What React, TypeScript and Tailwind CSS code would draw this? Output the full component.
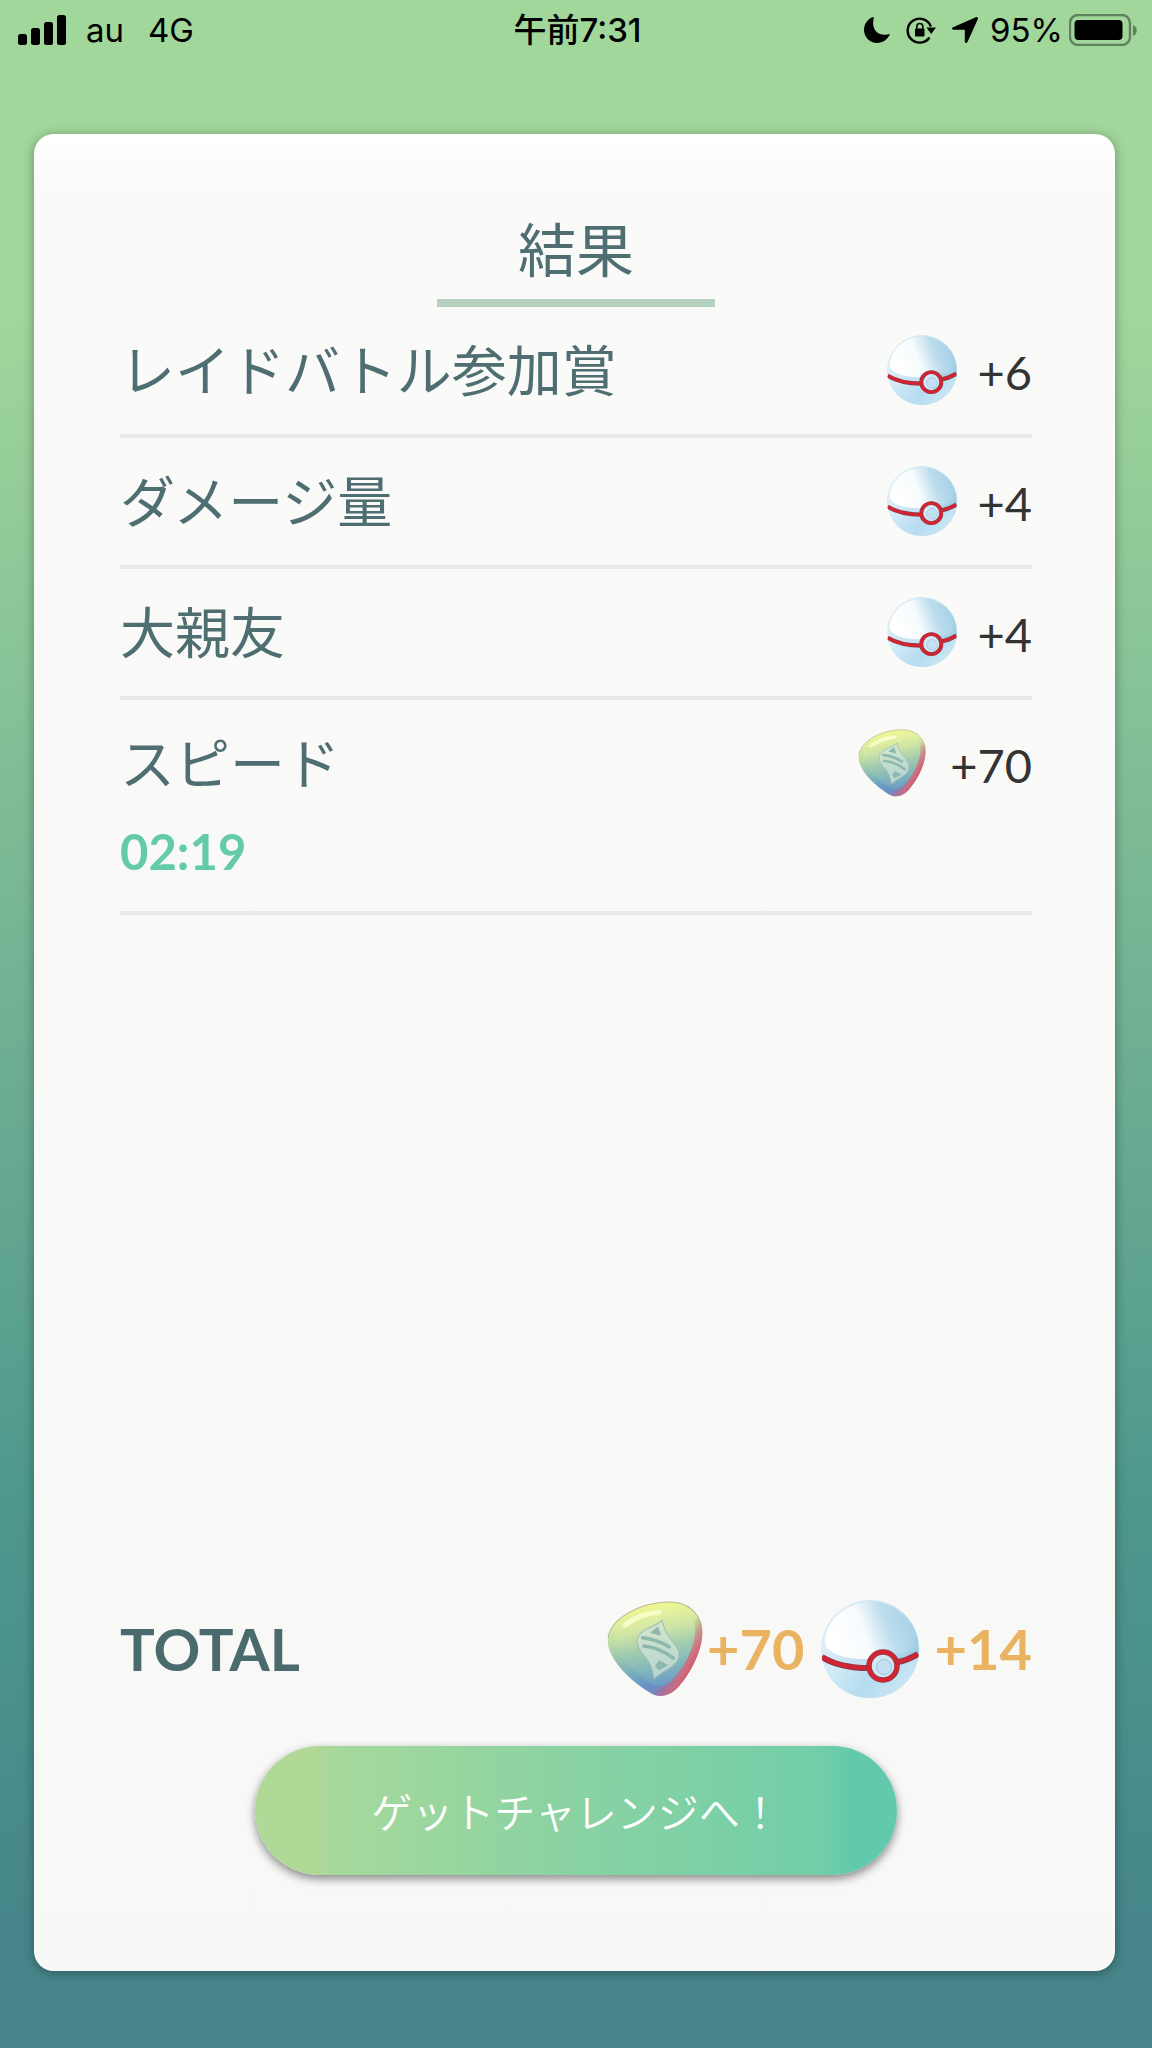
import { useId } from "react";

interface IconProps {
  className?: string;
}

interface Reward {
  label: string;
  amount: string;
  kind: "ball" | "candy";
  time?: string;
}

const rewards: Reward[] = [
  { label: "レイドバトル参加賞", amount: "+6", kind: "ball" },
  { label: "ダメージ量", amount: "+4", kind: "ball" },
  { label: "大親友", amount: "+4", kind: "ball" },
  { label: "スピード", amount: "+70", kind: "candy", time: "02:19" },
];

function PremierBall({ className }: IconProps) {
  const id = useId();

  return (
    <svg viewBox="0 0 98 98" className={className} aria-hidden="true">
      <defs>
        <linearGradient id={`${id}-top`} x1="0.15" y1="0.2" x2="0.95" y2="0.6">
          <stop offset="0" stopColor="#dceef6" />
          <stop offset="0.5" stopColor="#c3e1f0" />
          <stop offset="1" stopColor="#9fcde4" />
        </linearGradient>
        <linearGradient id={`${id}-shine`} x1="0.1" y1="0.6" x2="0.95" y2="0.4">
          <stop offset="0" stopColor="#ffffff" />
          <stop offset="0.4" stopColor="#f6fbfd" />
          <stop offset="0.72" stopColor="#bddded" />
          <stop offset="1" stopColor="#a9d2e8" />
        </linearGradient>
        <linearGradient id={`${id}-base`} x1="0" y1="0.4" x2="1" y2="0.8">
          <stop offset="0" stopColor="#d6edf8" />
          <stop offset="0.5" stopColor="#b5dcf0" />
          <stop offset="1" stopColor="#d3eaf5" />
        </linearGradient>
        <clipPath id={`${id}-clip`}>
          <circle cx="49" cy="49" r="49" />
        </clipPath>
      </defs>
      <g clipPath={`url(#${id}-clip)`}>
        <rect width="98" height="98" fill={`url(#${id}-top)`} />
        <path d="M4 43C4 22 24 2 50 2c24 0 41 19 43 36 0 11-8 16-20 16-6-5-19-4-24 5C28 60 5 54 4 43Z" fill={`url(#${id}-shine)`} />
        <path d="M0 56c14 8 30 11 48 12l14 8 17-12c8-1 13-4 19-8v42H0Z" fill={`url(#${id}-base)`} />
        <path d="M1 57c13 8 29 11 47 11M76 62c8-1 14-4 21-8" fill="none" stroke="#8c3a4c" strokeWidth="6" />
        <path d="M1 57c13 8 29 11 47 11M76 62c8-1 14-4 21-8" fill="none" stroke="#d4242f" strokeWidth="4" />
      </g>
      <circle cx="62" cy="66" r="14" fill="#d2e9f5" stroke="#8c3a4c" strokeWidth="5.5" />
      <circle cx="62" cy="66" r="14" fill="none" stroke="#d4242f" strokeWidth="4" />
      <circle cx="63" cy="67" r="7.500" fill="#c3e1f3" stroke="#9fc4da" strokeWidth="1" />
    </svg>
  );
}

function RareCandy({ className }: IconProps) {
  const id = useId();

  return (
    <svg viewBox="0 0 94 94" className={className} aria-hidden="true">
      <defs>
        <linearGradient id={`${id}-body`} x1="0.4" y1="0" x2="0.6" y2="1">
          <stop offset="0" stopColor="#f3f98e" />
          <stop offset="0.2" stopColor="#dcee9e" />
          <stop offset="0.45" stopColor="#a9d0ab" />
          <stop offset="0.7" stopColor="#77aebb" />
          <stop offset="0.88" stopColor="#6690c6" />
          <stop offset="1" stopColor="#8a7cb8" />
        </linearGradient>
        <linearGradient id={`${id}-edge`} x1="0.45" y1="0.45" x2="0.9" y2="0.7">
          <stop offset="0.55" stopColor="#e0525f" stopOpacity="0" />
          <stop offset="0.85" stopColor="#dd6577" stopOpacity="0.8" />
          <stop offset="1" stopColor="#e0525f" />
        </linearGradient>
        <linearGradient id={`${id}-face`} x1="0.4" y1="0" x2="0.6" y2="1">
          <stop offset="0" stopColor="#f0f79a" />
          <stop offset="0.3" stopColor="#cde4a6" />
          <stop offset="0.52" stopColor="#a3ccae" />
          <stop offset="0.75" stopColor="#83b8bb" />
          <stop offset="1" stopColor="#6a9bc6" />
        </linearGradient>
      </defs>
      <path d="M1 36C4 17 32 1 61 1c18 0 29 10 32 25 3 20-13 49-26 61-8 7-18 8-26 2C24 79-2 55 1 36Z" fill={`url(#${id}-body)`} />
      <path d="M1 36C4 17 32 1 61 1c18 0 29 10 32 25 3 20-13 49-26 61-8 7-18 8-26 2C24 79-2 55 1 36Z" fill={`url(#${id}-edge)`} />
      <path d="M1 36C4 17 32 1 61 1c18 0 29 10 32 25" fill="none" stroke="#b4b992" strokeWidth="1" />
      <path d="M7 35C12 20 36 6 60 6c15 0 24 7 26 20 2 18-12 42-24 53-6 5-13 6-19 1C28 70 3 50 7 35Z" fill={`url(#${id}-face)`} />
      <path d="M17 21c9-7 20-11 31-12 8-1 7 4 0 5-10 1-19 5-26 10-6 4-10 1-5-3Z" fill="#fbffd2" opacity="0.8" />
      <path d="M54 19c2 9 4 13 10 20 8 9 9 17 1 24-8 6-13 8-19 13-2-11-3-15-11-24-8-10-8-18 3-24 7-4 12-5 16-9Z" fill="#cfe3d8" fillOpacity="0.75" stroke="#9dbcb2" strokeWidth="1" />
      <g fill="none" stroke="#8cb8ae" strokeWidth="3.5" strokeLinecap="round">
        <path d="M35 36c9 1 18 4 26 9" />
        <path d="M36 44c10 1 20 5 29 12" />
      </g>
      <path d="m42 31 8-6 3 9Z M47 64l4-6 9 5-9 5Z" fill="#8cb8ae" />
    </svg>
  );
}

function RewardIcon({ kind }: { kind: Reward["kind"] }) {
  return kind === "ball" ? <PremierBall className="mr-5 size-[70px]" /> : <RareCandy className="mr-6 size-[68px]" />;
}

function StatusBar() {
  return (
    <header className="grid h-15 grid-cols-3 items-center pl-[18px] pr-[15px] font-[Inter,'Noto_Sans_CJK_JP',sans-serif] text-[33px] leading-10 text-black">
      <div className="flex items-center">
        <svg viewBox="0 0 48 30" className="h-[30px] w-12" role="img" aria-label="電波">
          <rect x="0" y="19" width="9" height="11" rx="2.5" />
          <rect x="13" y="13" width="9" height="17" rx="2.5" />
          <rect x="26" y="7" width="9" height="23" rx="2.5" />
          <rect x="39" y="0" width="9" height="30" rx="2.5" />
        </svg>
        <span className="ml-5">au</span>
        <span className="ml-6">4G</span>
      </div>
      <time className="text-center font-medium">午前7:31</time>
      <div className="flex items-center justify-end">
        <svg viewBox="0 0 26 26" className="size-[26px]" role="img" aria-label="おやすみモード">
          <path d="M10 0C4 1 0 7 0 13c0 7 6 13 13 13 6 0 11-4 13-9C17 20 6 15 10 0Z" />
        </svg>
        <svg viewBox="0 0 30 28" className="ml-4 h-7 w-[30px]" role="img" aria-label="画面の向きロック">
          <path d="M24.9 10.5A12 12 0 1 0 23.500 21.500" fill="none" stroke="#000" strokeWidth="2.4" />
          <path d="M20.5 11.5h9.5l-4.8 6.5Z" />
          <rect x="9" y="12.5" width="9.5" height="8" rx="1" />
          <path d="M10.8 13v-2.500a3 3 0 0 1 6 0V13" fill="none" stroke="#000" strokeWidth="1.6" />
        </svg>
        <svg viewBox="0 0 26 26" className="ml-4 size-[26px]" role="img" aria-label="位置情報">
          <path d="M23.800.3 1 10.200c-1.500.7-1.200 2.500.3 2.500l11.500.1v11.700c0 1.700 2 2 2.700.5L25.800 2.200C26.300.7 25.200-.3 23.800.3Z" />
        </svg>
        <span className="ml-3">95%</span>
        <svg viewBox="0 0 68 32" className="ml-1.5 h-8 w-[68px]" role="img" aria-label="バッテリー">
          <rect x="1" y="1" width="60" height="30" rx="8" fill="none" stroke="#000" strokeOpacity="0.4" strokeWidth="2.4" />
          <rect x="5.500" y="6" width="48" height="20" rx="4" />
          <path d="M64 11c5 2 5 9 0 11Z" fillOpacity="0.4" />
        </svg>
      </div>
    </header>
  );
}

function RewardRow({ reward }: { reward: Reward }) {
  return (
    <li className="border-b-4 border-[#e9e9e8] pb-[26px]">
      <div className="flex h-[101px] items-end justify-between">
        <span className="text-[55px] leading-[82px] text-[#4f6e72]">{reward.label}</span>
        <span className="flex h-[76px] items-center font-[Lato,sans-serif] text-[47px] text-[#333333]">
          <RewardIcon kind={reward.kind} />
          <span className="pt-1">{reward.amount}</span>
        </span>
      </div>
      {reward.time && (
        <time className="mt-4 block font-[Lato,sans-serif] text-[49px] leading-[68px] font-bold text-[#63cba9]">{reward.time}</time>
      )}
    </li>
  );
}

export default function App() {
  return (
    <div className="flex min-h-screen flex-col bg-linear-to-b from-[#a1d79b] from-15% via-[#4f988d] via-73% to-[#46868b] to-95% font-['Noto_Sans_CJK_JP',sans-serif]">
      <StatusBar />
      <main className="mt-[74px] mr-[37px] mb-[77px] ml-[34px] flex grow flex-col rounded-[20px] bg-linear-to-b from-white via-[#fafaf9] via-3% to-[#f8f8f7] pt-[76px] pr-[83px] pb-24 pl-[86px] shadow-[0_2px_12px_rgba(0,0,0,0.35)]">
        <h1 className="mx-auto w-[278px] border-b-8 border-[#b7d1c1] pb-3.5 text-center text-[58px] leading-[75px] text-[#4f6e72]">
          結果
        </h1>
        <ul>
          {rewards.map((reward) => (
            <RewardRow key={reward.label} reward={reward} />
          ))}
        </ul>

        <section className="mt-auto flex items-center font-[Lato,sans-serif] text-[56px] leading-[98px] font-bold text-[#e9b362]">
          <h2 className="mr-auto text-[58px] text-[#4b6a6d]">TOTAL</h2>
          <RareCandy className="size-24" />
          <span className="ml-1">+70</span>
          <PremierBall className="ml-4 size-[98px]" />
          <span className="ml-4">+14</span>
        </section>
        <button
          type="button"
          className="mx-auto mt-12 h-[129px] w-[642px] rounded-full bg-[linear-gradient(to_right,#b0d998_10%,#a6d99b_12%,#8dd3a2_45%,#72cea8_88%,#62c9ad_93%)] text-[41px] font-[350] text-white shadow-[0_4px_10px_rgba(0,0,0,0.45)]"
        >
          ゲットチャレンジへ！
        </button>
      </main>
    </div>
  );
}
